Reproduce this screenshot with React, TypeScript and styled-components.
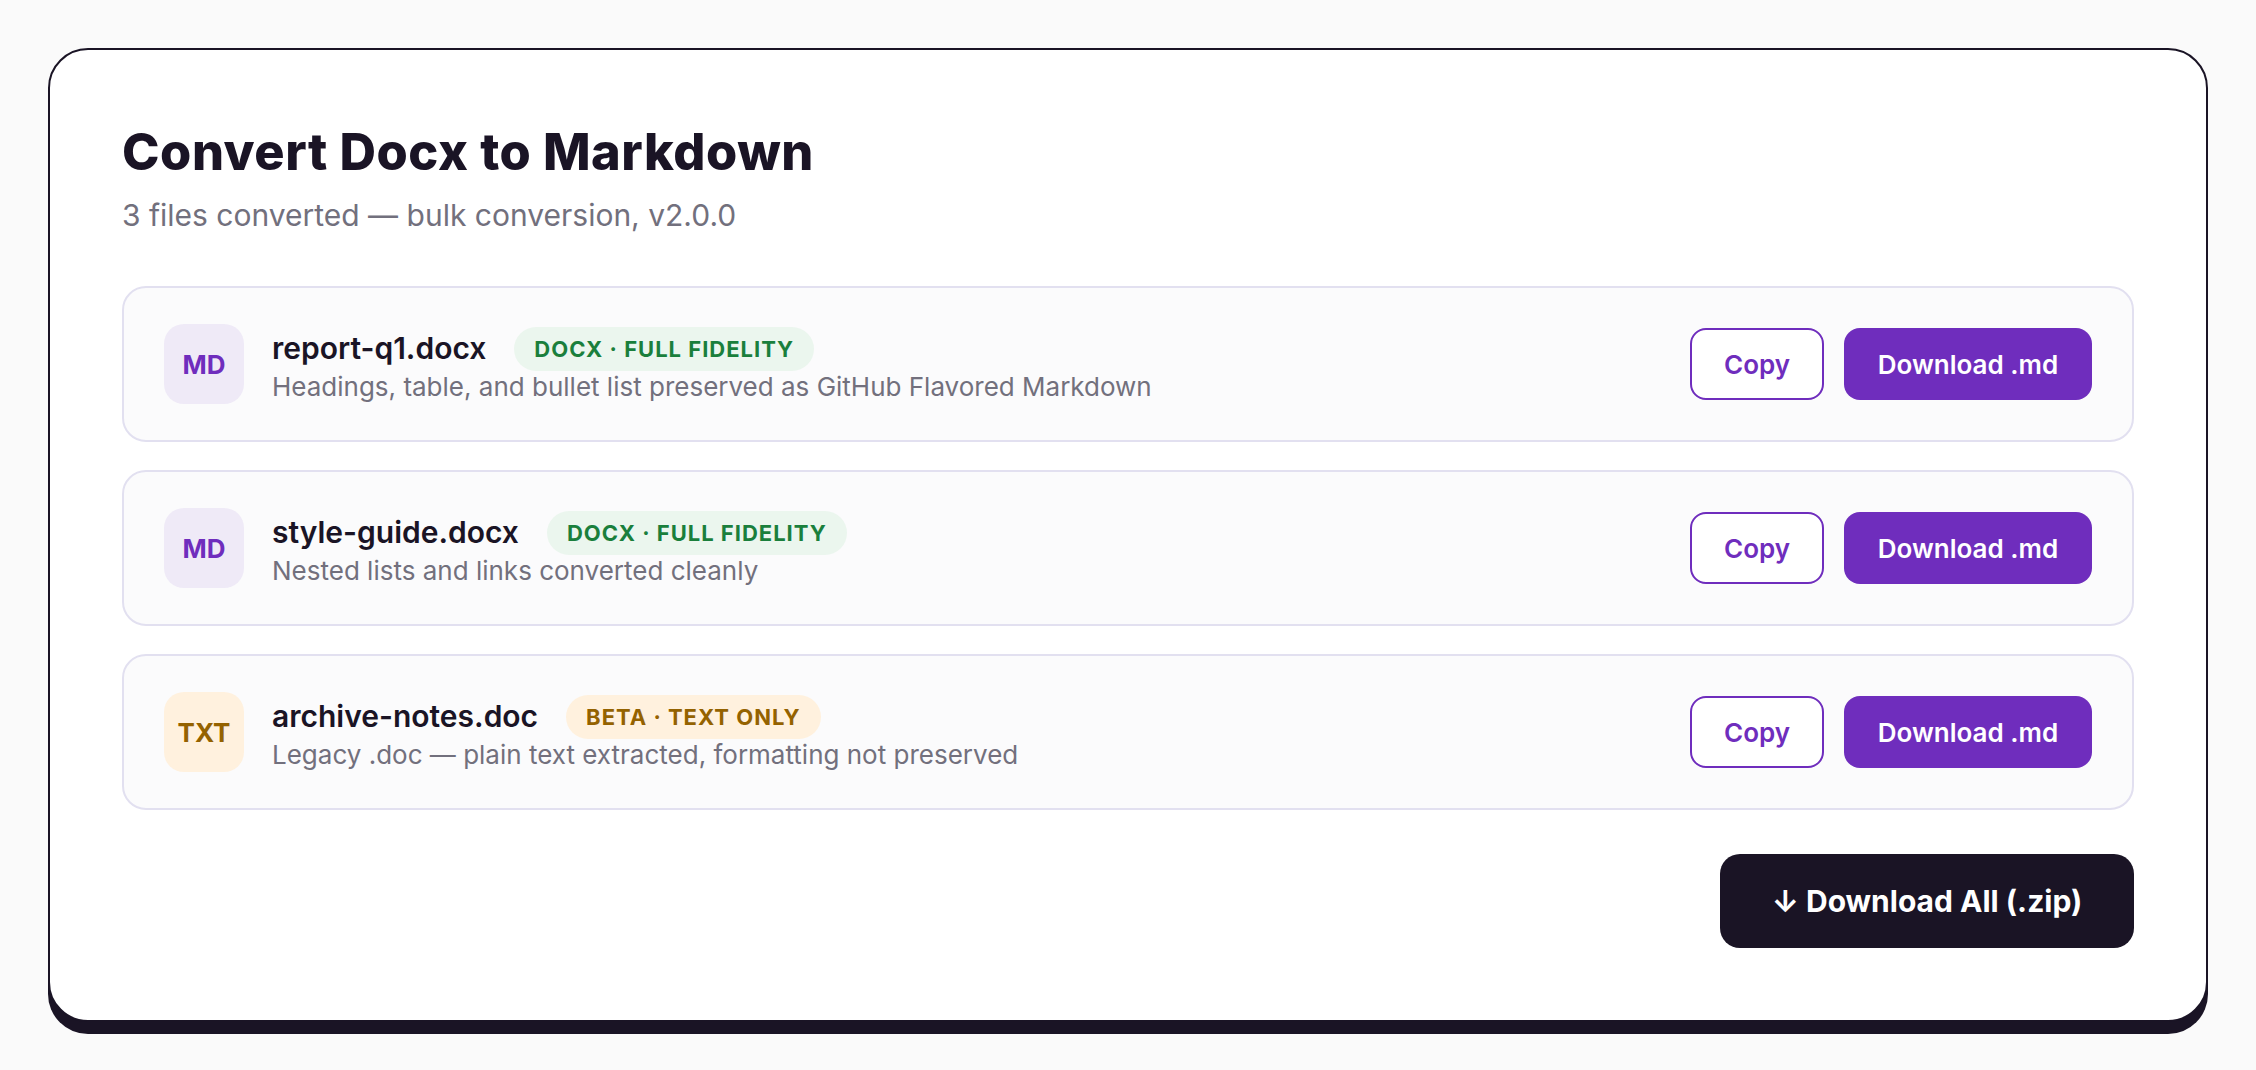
import React from "react";
import styled, { createGlobalStyle } from "styled-components";

const Global = createGlobalStyle`
  * { box-sizing: border-box; }
  html, body { margin: 0; padding: 0; }
  body {
    background: #fafafa;
    font-family: Inter, "Noto Sans", sans-serif;
    color: #1a1425;
  }
`;

const Page = styled.main`
  height: 1070px;
  padding: 48px;
`;

const Card = styled.section`
  height: 974px;
  display: flex;
  flex-direction: column;
  padding: 72px;
  background: #fff;
  border: 2px solid #1a1425;
  border-radius: 40px;
  box-shadow: 0 12px 0 #1a1425;
`;

const Title = styled.h1`
  margin: 0;
  font-size: 50.5px;
  line-height: 60px;
  font-weight: 800;
  letter-spacing: 0.55px;
  color: #1a1425;
`;

const Subtitle = styled.p`
  margin: 13px 0 0;
  font-size: 30px;
  line-height: 40px;
  color: #72707d;
`;

const List = styled.div`
  margin-top: 51px;
  display: flex;
  flex-direction: column;
  gap: 28px;
`;

const Row = styled.article`
  height: 156px;
  display: flex;
  align-items: center;
  gap: 28px;
  padding: 0 40px;
  background: #fbfbfc;
  border: 2px solid #e2e0f0;
  border-radius: 24px;
`;

const Tile = styled.div<{ $tone: "md" | "txt" }>`
  flex: none;
  width: 80px;
  height: 80px;
  display: flex;
  align-items: center;
  justify-content: center;
  border-radius: 20px;
  font-size: 26px;
  font-weight: 700;
  background: ${(p) => (p.$tone === "md" ? "#efeaf7" : "#fff1de")};
  color: ${(p) => (p.$tone === "md" ? "#6f2dbd" : "#946200")};
`;

const Info = styled.div`
  flex: 1;
  min-width: 0;
  padding-top: 3px;
  display: flex;
  flex-direction: column;
`;

const NameLine = styled.div`
  display: flex;
  align-items: center;
  gap: 28px;
  height: 44px;
  margin-bottom: -1px;
`;

const Name = styled.span`
  font-size: 30px;
  line-height: 38px;
  font-weight: 600;
  margin-top: -3px;
  color: #1a1425;
`;

const Badge = styled.span<{ $tone: "ok" | "beta" }>`
  height: 44px;
  display: flex;
  align-items: center;
  padding: 0 20px;
  border-radius: 22px;
  font-size: 22px;
  font-weight: 700;
  letter-spacing: 1px;
  background: ${(p) => (p.$tone === "ok" ? "#ebf6ee" : "#fff1de")};
  color: ${(p) => (p.$tone === "ok" ? "#1a7f3c" : "#946200")};
`;

const Desc = styled.div`
  font-size: 26px;
  line-height: 34px;
  color: #72707d;
`;

const Actions = styled.div`
  flex: none;
  display: flex;
  gap: 20px;
`;

const CopyButton = styled.button`
  width: 134px;
  height: 72px;
  padding: 0;
  background: #fff;
  border: 2px solid #6f2dbd;
  border-radius: 16px;
  color: #6f2dbd;
  font: 600 26px Inter, sans-serif;
`;

const DownloadButton = styled.button`
  width: 248px;
  height: 72px;
  padding: 0;
  background: #6f2dbd;
  border: none;
  border-radius: 16px;
  color: #fff;
  font: 600 26px Inter, sans-serif;
`;

const Footer = styled.div`
  margin-top: 44px;
  display: flex;
  justify-content: flex-end;
`;

const AllButton = styled.button`
  width: 414px;
  height: 94px;
  padding: 0;
  background: #1a1425;
  border: none;
  border-radius: 20px;
  color: #fff;
  font: 700 30px Inter, sans-serif;
`;

const files = [
  { name: "report-q1.docx", tile: "MD", tone: "md", badge: "DOCX · FULL FIDELITY", badgeTone: "ok", desc: "Headings, table, and bullet list preserved as GitHub Flavored Markdown" },
  { name: "style-guide.docx", tile: "MD", tone: "md", badge: "DOCX · FULL FIDELITY", badgeTone: "ok", desc: "Nested lists and links converted cleanly" },
  { name: "archive-notes.doc", tile: "TXT", tone: "txt", badge: "BETA · TEXT ONLY", badgeTone: "beta", desc: "Legacy .doc — plain text extracted, formatting not preserved" },
] as const;

export default function App() {
  return (
    <Page>
      <Global />
      <Card>
        <Title>Convert Docx to Markdown</Title>
        <Subtitle>3 files converted — bulk conversion, v2.0.0</Subtitle>
        <List>
          {files.map((f) => (
            <Row key={f.name}>
              <Tile $tone={f.tone}>{f.tile}</Tile>
              <Info>
                <NameLine>
                  <Name>{f.name}</Name>
                  <Badge $tone={f.badgeTone}>{f.badge}</Badge>
                </NameLine>
                <Desc>{f.desc}</Desc>
              </Info>
              <Actions>
                <CopyButton>Copy</CopyButton>
                <DownloadButton>Download .md</DownloadButton>
              </Actions>
            </Row>
          ))}
        </List>
        <Footer>
          <AllButton>↓ Download All (.zip)</AllButton>
        </Footer>
      </Card>
    </Page>
  );
}
